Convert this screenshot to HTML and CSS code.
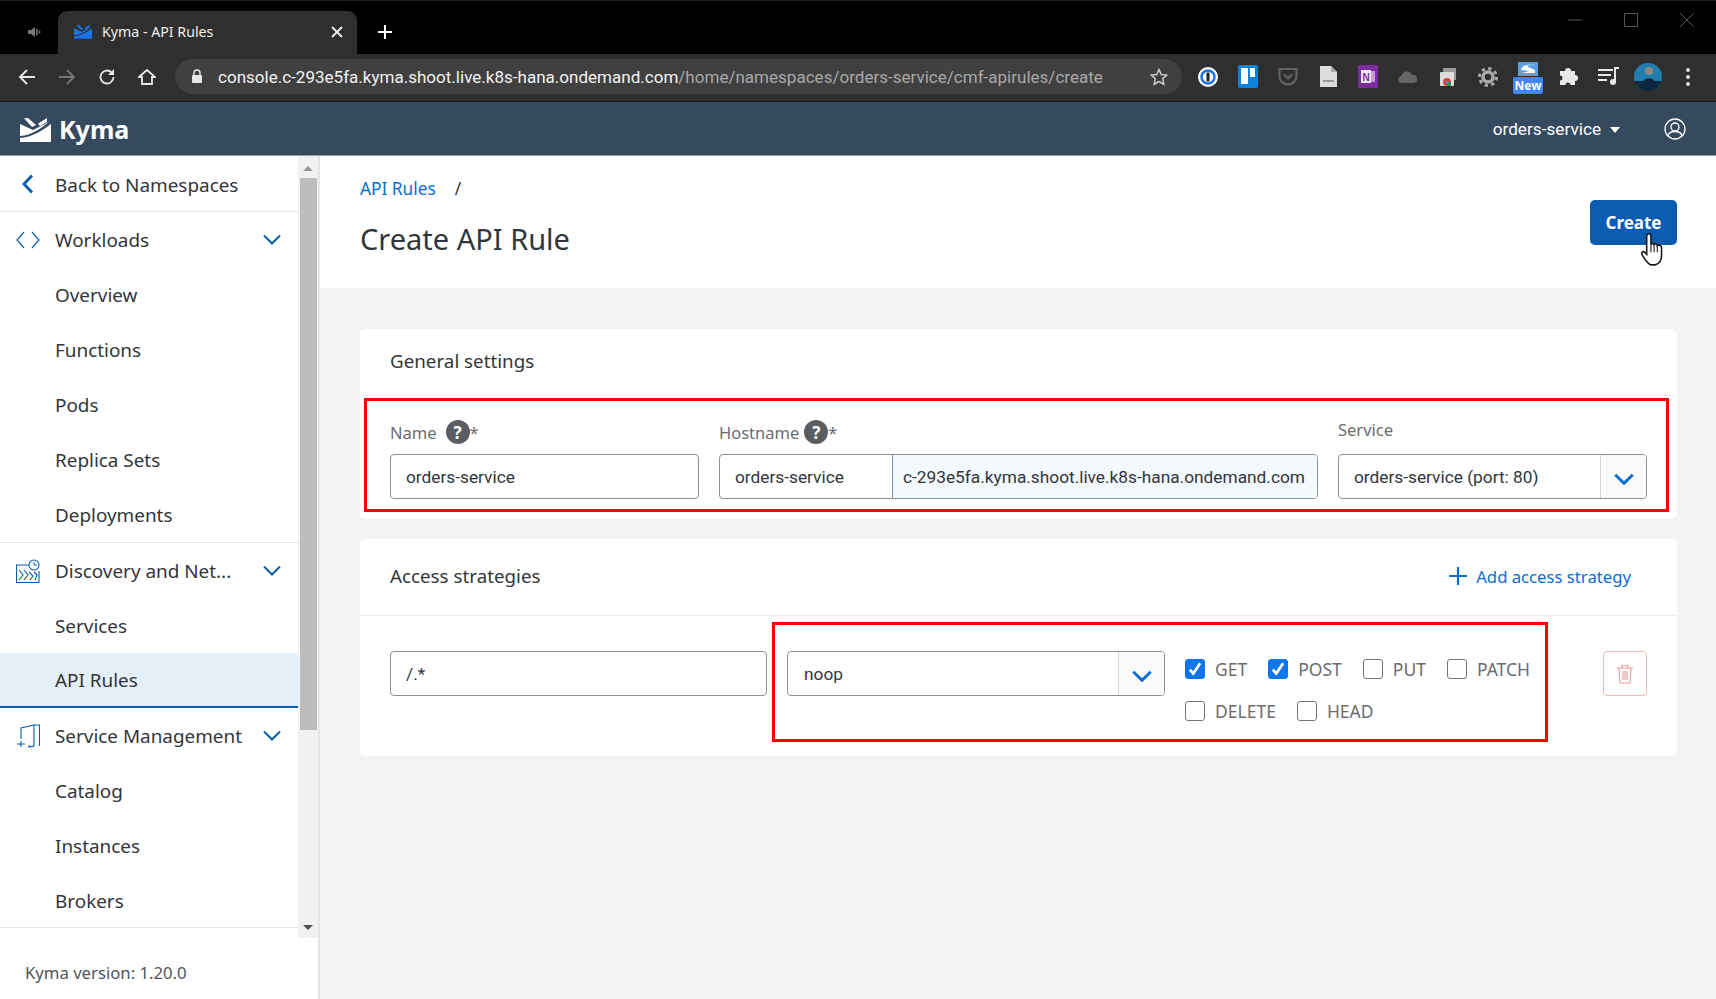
FILE: index.html
```html
<!DOCTYPE html>
<html>
  <head>
    <meta charset="UTF-8" />
    <title>Kyma - API Rules</title>
    <link rel="stylesheet" href="styles.css">
  </head>
  <body>
    <div class="tabstrip">
      <svg class="muted-tab" width="16" height="16" viewBox="0 0 16 16"><path d="M2 6h3l4-3v10l-4-3H2z" fill="#777"/><path d="M11 5v6M13.500 6.500v3" stroke="#777" stroke-width="1.500"/></svg>
      <div class="tab">
        <svg width="18" height="15" viewBox="0 0 31 25"><path d="M4 1.300L8 1l8 7-4 2zM18 6.700L27 1v4l-7 4zM0 7l13 6 16-8C20 12 12 18 0 19zM0 21C12 20 22 14 31 7v18H0z" fill="#1a73e8"/></svg>
        <span class="tab-title">Kyma - API Rules</span>
        <svg class="tab-close" width="12" height="12" viewBox="0 0 12 12"><path d="M1 1l10 10M11 1L1 11" stroke="#eee" stroke-width="1.800"/></svg>
      </div>
      <svg class="new-tab" width="16" height="16" viewBox="0 0 16 16"><path d="M8 1v14M1 8h14" stroke="#fff" stroke-width="2"/></svg>
      <div class="window-controls">
        <svg width="14" height="14" viewBox="0 0 14 14"><path d="M0 7h14" stroke="#555"/></svg>
        <svg width="14" height="14" viewBox="0 0 14 14"><path d="M.5.5h13v13H.5z" fill="none" stroke="#555"/></svg>
        <svg width="14" height="14" viewBox="0 0 14 14"><path d="M0 0l14 14M14 0L0 14" stroke="#555"/></svg>
      </div>
    </div>

    <div class="toolbar">
      <div class="nav-buttons">
        <svg width="18" height="18" viewBox="0 0 18 18"><path d="M17 9H2M9 2L2 9l7 7" fill="none" stroke="#e8e8e8" stroke-width="1.800"/></svg>
        <svg width="18" height="18" viewBox="0 0 18 18"><path d="M1 9h15M9 2l7 7-7 7" fill="none" stroke="#777" stroke-width="1.800"/></svg>
        <svg width="18" height="18" viewBox="0 0 18 18"><path d="M15.500 9a6.500 6.500 0 1 1-2-4.700" fill="none" stroke="#e8e8e8" stroke-width="1.800"/><path d="M16 1v6h-6z" fill="#e8e8e8"/></svg>
        <svg width="18" height="18" viewBox="0 0 18 18"><path d="M1 9l8-7 8 7h-3v7H4V9z" fill="none" stroke="#e8e8e8" stroke-width="1.800"/></svg>
      </div>
      <div class="omnibox">
        <svg width="12" height="15" viewBox="0 0 12 15"><path d="M3 6V4a3 3 0 0 1 6 0v2" fill="none" stroke="#e8e8e8" stroke-width="1.400"/><rect x="1" y="6" width="10" height="8" rx="1" fill="#e8e8e8"/></svg>
        <span class="url"><b>console.c-293e5fa.kyma.shoot.live.k8s-hana.ondemand.com</b>/home/namespaces/orders-service/cmf-apirules/create</span>
        <svg class="star" width="18" height="18" viewBox="0 0 18 18"><path d="M9 1.500l2.300 5 5.400.6-4 3.700 1.100 5.400L9 13.500l-4.800 2.700 1.100-5.400-4-3.700 5.400-.6z" fill="none" stroke="#ccc" stroke-width="1.500"/></svg>
      </div>
      <div class="extensions">
        <svg width="20" height="20" viewBox="0 0 20 20"><circle cx="10" cy="10" r="10" fill="#fff"/><circle cx="10" cy="10" r="6.500" fill="none" stroke="#1a73e8" stroke-width="2.500"/><rect x="8.500" y="5.500" width="3" height="9" fill="#222"/></svg>
        <svg width="20" height="23" viewBox="0 0 20 23"><rect width="20" height="23" rx="2" fill="#0c83d9"/><rect x="3" y="3" width="7" height="16" fill="#fff"/><rect x="12" y="3" width="5" height="9" fill="#fff"/></svg>
        <svg width="20" height="21" viewBox="0 0 20 20"><path d="M1.500 2.500h17v7a8.500 8.500 0 0 1-17 0z" fill="none" stroke="#666" stroke-width="2"/><path d="M6 8l4 4 4-4" fill="none" stroke="#666" stroke-width="2"/></svg>
        <svg width="17" height="21" viewBox="0 0 17 21"><path d="M0 0h11l6 6v15H0z" fill="#ddd"/><path d="M11 0l6 6h-6z" fill="#aaa"/><rect x="3" y="14" width="11" height="2" fill="#999"/></svg>
        <svg width="20" height="23" viewBox="0 0 20 23"><rect width="20" height="23" fill="#7b2c9e"/><rect x="3" y="5" width="10" height="13" fill="#f2e6f7"/><rect x="13" y="6" width="4" height="11" fill="#c69bd8"/><text x="4.500" y="15.500" class="ext-letter">N</text></svg>
        <svg width="20" height="14" viewBox="0 0 20 14"><path d="M4 13a3.500 3.500 0 0 1-.5-7A5.500 5.500 0 0 1 14 5a4 4 0 0 1 2 8z" fill="#666"/></svg>
        <svg width="18" height="20" viewBox="0 0 18 20"><rect x="4" y="1" width="13" height="12" fill="#999"/><rect x="1" y="5" width="14" height="14" rx="1" fill="#ddd"/><circle cx="8" cy="15" r="4" fill="#db4437"/><path d="M8 15v4h4v-4z" fill="#0f9d58"/><circle cx="8" cy="15" r="1.500" fill="#4285f4"/></svg>
        <svg width="20" height="20" viewBox="0 0 20 20"><circle cx="10" cy="10" r="5" fill="none" stroke="#aaa" stroke-width="3.500"/><circle cx="10" cy="10" r="8.500" fill="none" stroke="#aaa" stroke-width="3" stroke-dasharray="3.300 3.370"/></svg>
        <div class="ext-new">
          <svg width="20" height="14" viewBox="0 0 20 14"><rect width="20" height="14" fill="#5b9fe0"/><path d="M3 7c2-4 8-5 14-4-4 0-8 0-7 2l7 3v3H3l9-2-9-1z" fill="#fff"/></svg>
          <span class="new-badge">New</span>
        </div>
        <svg width="19" height="19" viewBox="0 0 19 19"><path d="M6 4a3 3 0 0 1 6 0h4v4a3 3 0 0 1 0 6v4h-4.500a2.500 2.500 0 0 0-5 0H1v-4.500a2.500 2.500 0 0 0 0-5V4z" fill="#e8e8e8"/></svg>
        <svg width="21" height="19" viewBox="0 0 21 19"><path d="M0 3h15M0 8h13M0 13h9" stroke="#e8e8e8" stroke-width="2"/><circle cx="15" cy="15" r="3" fill="#e8e8e8"/><path d="M17 15V1h4" fill="none" stroke="#e8e8e8" stroke-width="2"/></svg>
        <svg class="avatar" width="28" height="28" viewBox="0 0 28 28"><defs><clipPath id="avatar-clip"><circle cx="14" cy="14" r="14"/></clipPath></defs><g clip-path="url(#avatar-clip)"><rect width="28" height="28" fill="#1f7fae"/><rect y="18" width="28" height="10" fill="#0c2a40"/><circle cx="15" cy="8" r="4" fill="#8d8a80"/><path d="M6 28c0-17 18-17 18 0z" fill="#0d2740"/></g></svg>
        <svg width="4" height="18" viewBox="0 0 4 18"><circle cx="2" cy="2" r="2" fill="#ddd"/><circle cx="2" cy="9" r="2" fill="#ddd"/><circle cx="2" cy="16" r="2" fill="#ddd"/></svg>
      </div>
    </div>

    <header class="shell">
      <svg class="shell-logo" width="31" height="25" viewBox="0 0 31 25"><path d="M4 1.300L8 1l8 7-4 2zM18 6.700L27 1v4l-7 4zM0 7l13 6 16-8C20 12 12 18 0 19zM0 21C12 20 22 14 31 7v18H0z" fill="#fff"/></svg>
      <span class="shell-title">Kyma</span>
      <span class="shell-namespace">orders-service</span>
      <span class="shell-caret"></span>
      <svg class="shell-user" width="22" height="22" viewBox="0 0 22 22"><circle cx="11" cy="11" r="10" fill="none" stroke="#fff" stroke-width="1.300"/><circle cx="11" cy="9" r="4" fill="none" stroke="#fff" stroke-width="1.300"/><path d="M4 18c1-6 13-6 14 0" fill="none" stroke="#fff" stroke-width="1.300"/></svg>
    </header>

    <div class="layout">
      <aside class="sidebar">
        <div class="sidebar-top">
          <nav class="nav">
            <a class="nav-row nav-back">
              <svg class="nav-icon" width="14" height="20" viewBox="0 0 14 20"><path d="M11 1.500L3 10l8 8.500" fill="none" stroke="#0a5cb0" stroke-width="2.800"/></svg>
              Back to Namespaces
            </a>
            <div class="nav-group nav-group-first">
              <a class="nav-row">
                <svg class="nav-icon" width="24" height="18" viewBox="0 0 24 18"><path d="M8 1L1 9l7 8M16 1l7 8-7 8" fill="none" stroke="#0a5cb0" stroke-width="1.200"/></svg>
                Workloads
                <svg class="nav-chevron" width="18" height="11" viewBox="0 0 18 11"><path d="M1 1.500l8 8 8-8" fill="none" stroke="#0a5cb0" stroke-width="2"/></svg>
              </a>
              <a class="nav-row">Overview</a>
              <a class="nav-row">Functions</a>
              <a class="nav-row">Pods</a>
              <a class="nav-row">Replica Sets</a>
              <a class="nav-row">Deployments</a>
            </div>
            <div class="nav-group">
              <a class="nav-row">
                <svg class="nav-icon" width="24" height="24" viewBox="0 0 24 24"><path d="M14 6H.5v17.500h22.500V12" fill="none" stroke="#0a5cb0" stroke-width="1.100"/><path d="M3 11l4 5-4 5M8 11l4 5-4 5M13 13l4 4-3 4M18 13l3 3-2 5" fill="none" stroke="#0a5cb0" stroke-width="1.100"/><circle cx="18" cy="6" r="5" fill="#fff" stroke="#0a5cb0" stroke-width="1.100"/><path d="M18 3v3h3" fill="none" stroke="#0a5cb0"/></svg>
                Discovery and Net...
                <svg class="nav-chevron" width="18" height="11" viewBox="0 0 18 11"><path d="M1 1.500l8 8 8-8" fill="none" stroke="#0a5cb0" stroke-width="2"/></svg>
              </a>
              <a class="nav-row">Services</a>
              <a class="nav-row nav-active">API Rules</a>
            </div>
            <div class="nav-group">
              <a class="nav-row">
                <svg class="nav-icon" width="24" height="24" viewBox="0 0 24 24"><path d="M5 15V4l13-3h5.500v20l-1 .5M18 1v21l-5 1v-2" fill="none" stroke="#0a5cb0" stroke-width="1.100"/><path d="M5 17v6M1 20h8" stroke="#0a5cb0" stroke-width="1.100"/></svg>
                Service Management
                <svg class="nav-chevron" width="18" height="11" viewBox="0 0 18 11"><path d="M1 1.500l8 8 8-8" fill="none" stroke="#0a5cb0" stroke-width="2"/></svg>
              </a>
              <a class="nav-row">Catalog</a>
              <a class="nav-row">Instances</a>
              <a class="nav-row">Brokers</a>
            </div>
          </nav>
          <div class="scrollbar">
            <span class="scroll-arrow scroll-up"></span>
            <span class="scroll-thumb"></span>
            <span class="scroll-arrow scroll-down"></span>
          </div>
        </div>
        <div class="sidebar-footer">Kyma version: 1.20.0</div>
      </aside>

      <main class="content">
        <section class="page-header">
          <div>
            <div class="breadcrumb"><a>API Rules</a><span>/</span></div>
            <h1>Create API Rule</h1>
          </div>
          <button class="btn-create">Create</button>
          <svg class="cursor" width="26" height="34" viewBox="0 0 24 32"><path d="M7 3c0-3 4-3 4 0v8c1-2 3-1 3 0 1-1 3-1 3 1 1-1 4-1 4 2v7c0 5-2 8-6 9h-4c-3-1-5-4-8-9-2-3 1-4 2-3l2 2z" fill="#fff" stroke="#1a1a1a" stroke-width="1.500"/><path d="M11 11v7M14 12v6M17 13v5" stroke="#1a1a1a"/></svg>
        </section>

        <section class="card">
          <div class="card-header"><h2>General settings</h2></div>
          <div class="general-body">
            <div class="field field-name">
              <label class="field-label">Name <span class="help">?</span><span class="req">*</span></label>
              <div class="input">orders-service</div>
            </div>
            <div class="field field-host">
              <label class="field-label">Hostname <span class="help">?</span><span class="req">*</span></label>
              <div class="input-group">
                <div class="host-value">orders-service</div>
                <div class="host-addon">c-293e5fa.kyma.shoot.live.k8s-hana.ondemand.com</div>
              </div>
            </div>
            <div class="field field-service">
              <label class="field-label field-label-plain">Service</label>
              <div class="select">
                <span class="select-value">orders-service (port: 80)</span>
                <span class="select-btn"><svg width="20" height="12" viewBox="0 0 18 11"><path d="M1 1.500l8 8 8-8" fill="none" stroke="#0a6ed1" stroke-width="2.600"/></svg></span>
              </div>
            </div>
          </div>
          <div class="annotation annotation-general"></div>
        </section>

        <section class="card">
          <div class="card-header card-header-split">
            <h2>Access strategies</h2>
            <a class="add-link"><svg width="18" height="18" viewBox="0 0 18 18"><path d="M9 0v18M0 9h18" stroke="#0a6ed1" stroke-width="2.200"/></svg>Add access strategy</a>
          </div>
          <div class="strategy-body">
            <div class="input input-path">/.*</div>
            <div class="select select-type">
              <span class="select-value">noop</span>
              <span class="select-btn"><svg width="20" height="12" viewBox="0 0 18 11"><path d="M1 1.500l8 8 8-8" fill="none" stroke="#0a6ed1" stroke-width="2.600"/></svg></span>
            </div>
            <div class="methods">
              <label class="method"><span class="check checked"><svg width="16" height="16" viewBox="0 0 14 14"><path d="M2.500 7.500l3 3.500 6-9" fill="none" stroke="#fff" stroke-width="2.400"/></svg></span>GET</label>
              <label class="method"><span class="check checked"><svg width="16" height="16" viewBox="0 0 14 14"><path d="M2.500 7.500l3 3.500 6-9" fill="none" stroke="#fff" stroke-width="2.400"/></svg></span>POST</label>
              <label class="method"><span class="check"></span>PUT</label>
              <label class="method"><span class="check"></span>PATCH</label>
              <label class="method"><span class="check"></span>DELETE</label>
              <label class="method"><span class="check"></span>HEAD</label>
            </div>
            <button class="btn-delete"><svg width="18" height="20" viewBox="0 0 18 20"><path d="M1 4h16M6 4V1.500h6V4M3 4l1 15h10l1-15M7 7v9M9 7v9M11 7v9" fill="none" stroke="#e9a0a0" stroke-width="1.200"/></svg></button>
          </div>
          <div class="annotation annotation-strategy"></div>
        </section>
      </main>
    </div>
  </body>
</html>
```
FILE: styles.css
```css
* {
  box-sizing: border-box;
}
body {
  margin: 0;
  height: 999px;
  overflow: hidden;
  font-family: "Noto Sans", Arial, sans-serif;
  color: #32363a;
  background: #f2f3f4;
}

/* browser chrome */
.tabstrip {
  height: 54px;
  background: #000;
  border-top: 1px solid #222;
  display: flex;
  align-items: flex-end;
  position: relative;
}
.muted-tab {
  margin: 0 16px 14px 26px;
}
.tab {
  width: 299px;
  height: 43px;
  background: #2f2f2f;
  border-radius: 9px 9px 0 0;
  display: flex;
  align-items: center;
  padding: 0 14px 2px 16px;
  color: #eee;
  font-size: 14.200px;
}
.tab-title {
  margin-left: 10px;
  flex: 1;
}
.new-tab {
  margin: 0 0 14px 20px;
}
.window-controls {
  margin-left: auto;
  display: flex;
  gap: 42px;
  padding: 0 22px 27px 0;
}
.toolbar {
  height: 48px;
  background: #2f2f2f;
  display: flex;
  align-items: center;
  border-bottom: 1px solid #1d1d1d;
  padding-bottom: 2px;
  color: #fff;
}
.nav-buttons {
  display: flex;
  gap: 22px;
  padding-left: 18px;
  width: 175px;
}
.omnibox {
  width: 1007px;
  height: 35px;
  background: #404040;
  border-radius: 18px;
  display: flex;
  align-items: center;
  padding: 0 14px 0 16px;
}
.url {
  margin-left: 15px;
  flex: 1;
  font-family: Roboto, sans-serif;
  font-size: 17.050px;
  color: #a9a9a9;
  white-space: nowrap;
}
.url b {
  font-weight: 400;
  color: #f2f2f2;
}
.extensions {
  display: grid;
  grid-template-columns: repeat(13, 40px);
  align-items: center;
  justify-items: center;
  padding-left: 6px;
}
.ext-letter {
  font: bold 10px "Liberation Sans", sans-serif;
  fill: #7b2c9e;
}
.ext-new {
  position: relative;
  width: 30px;
  height: 32px;
  display: flex;
  justify-content: center;
  margin-top: 2px;
}
.new-badge {
  position: absolute;
  left: 0;
  bottom: 0;
  width: 30px;
  height: 17px;
  background: #4285f4;
  border-radius: 2px;
  color: #fff;
  font: bold 12px/17px "Noto Sans", sans-serif;
  text-align: center;
}

/* kyma shell */
.shell {
  height: 54px;
  background: #354a5f;
  border-bottom: 1px solid #8fa0ad;
  display: flex;
  align-items: center;
  color: #fff;
  padding: 1px 30px 0 20px;
}
.shell-title {
  margin-left: 8px;
  font-size: 25px;
  font-weight: 700;
  flex: 1;
}
.shell-namespace {
  font-family: Roboto, sans-serif;
  font-size: 17.200px;
}
.shell-caret {
  margin: 2px 0 0 9px;
  border-left: 5px solid transparent;
  border-right: 5px solid transparent;
  border-top: 6px solid #fff;
}
.shell-user {
  margin-left: 44px;
}

.layout {
  display: flex;
  height: 843px;
}

/* side navigation */
.sidebar {
  width: 320px;
  background: #fff;
  border-right: 2px solid #e5e5e5;
  display: flex;
  flex-direction: column;
  flex-shrink: 0;
}
.sidebar-top {
  display: flex;
  height: 772px;
  position: relative;
}
.nav {
  width: 298px;
  height: 772px;
  overflow: hidden;
  border-bottom: 1px solid #e5e5e5;
}
.nav-row {
  height: 55px;
  display: flex;
  align-items: center;
  padding-left: 55px;
  font-size: 18.900px;
  position: relative;
}
.nav-back {
  border-bottom: 1px solid #e5e5e5;
  height: 56px;
  padding-top: 3px;
}
.nav-group {
  box-shadow: inset 0 -1px 0 #e5e5e5;
}
.nav-group:last-child {
  box-shadow: none;
}
.nav-group-first {
  padding-bottom: 1px;
}
.nav-icon {
  position: absolute;
  left: 16px;
  top: 50%;
  transform: translateY(-50%);
}
.nav-back .nav-icon {
  left: 21px;
}
.nav-chevron {
  position: absolute;
  right: 17px;
  top: 22px;
}
.nav-active {
  background: #e5eff8;
  border-bottom: 2px solid #0a5cb0;
}
.scrollbar {
  width: 20px;
  height: 782px;
  background: #f1f1f1;
  display: flex;
  flex-direction: column;
  align-items: center;
  position: absolute;
  left: 298px;
  top: 0;
}
.scroll-thumb {
  width: 17px;
  height: 552px;
  background: #bdbdbd;
}
.scroll-arrow {
  border-left: 5px solid transparent;
  border-right: 5px solid transparent;
  height: 0;
}
.scroll-up {
  border-bottom: 5px solid #9a9a9a;
  margin: 10px 0 7px;
}
.scroll-down {
  border-top: 5px solid #505050;
  margin-top: auto;
  margin-bottom: 8px;
}
.sidebar-footer {
  padding: 33px 0 0 25px;
  font-size: 16.700px;
  color: #515559;
}

/* main area */
.content {
  flex: 1;
  padding-bottom: 20px;
}
.page-header {
  height: 132px;
  background: #fff;
  padding: 19px 39px 0 40px;
  display: flex;
  justify-content: space-between;
  position: relative;
  margin-bottom: 41px;
}
.breadcrumb {
  font-size: 17.300px;
  display: flex;
  gap: 19px;
  height: 30px;
  line-height: 28px;
}
.breadcrumb a {
  color: #0a6ed1;
}
h1 {
  margin: 14px 0 0;
  font-size: 29px;
  font-weight: 400;
  line-height: 39px;
}
.btn-create {
  margin-top: 25px;
  width: 87px;
  height: 45px;
  border: none;
  border-radius: 5px;
  background: #0a5cb0;
  color: #fff;
  font: 700 17px "Noto Sans", sans-serif;
}
.cursor {
  position: absolute;
  left: 1319px;
  top: 77px;
}
.card {
  margin: 0 39px 20px 40px;
  background: #fff;
  border-radius: 5px;
  position: relative;
}
.card-header {
  height: 67px;
  padding: 0 30px 2px;
  display: flex;
  align-items: center;
  border-bottom: 1px solid #eeeeee;
}
.card-header-split {
  height: 77px;
  justify-content: space-between;
  padding-right: 46px;
}
h2 {
  margin: 0;
  font-size: 18.800px;
  font-weight: 400;
}
.add-link {
  display: flex;
  align-items: center;
  gap: 9px;
  color: #0a6ed1;
  font-size: 16.700px;
}
.general-body {
  display: grid;
  grid-template-columns: 309px 599px 309px;
  column-gap: 20px;
  padding: 22px 30px 20px;
}
.field-label {
  height: 36px;
  display: flex;
  align-items: center;
  color: #6a6d70;
  font-size: 16.500px;
  padding-bottom: 8px;
}
.field-label-plain {
  padding-bottom: 14px;
}
.help {
  width: 24px;
  height: 24px;
  margin-left: 9px;
  border-radius: 50%;
  background: #5a5e62;
  color: #fff;
  font-size: 17px;
  font-weight: 700;
  display: flex;
  align-items: center;
  justify-content: center;
}
.field-host .help {
  margin-left: 5px;
}
.input {
  height: 45px;
  border: 1px solid #89919a;
  border-radius: 4px;
  padding: 0 15px;
  display: flex;
  align-items: center;
  font-family: Roboto, sans-serif;
  font-size: 17.300px;
  background: #fff;
}
.input-group {
  height: 45px;
  display: flex;
  border: 1px solid #89919a;
  border-radius: 4px;
  overflow: hidden;
  font-family: Roboto, sans-serif;
  font-size: 17.300px;
}
.host-value {
  width: 173px;
  flex-shrink: 0;
  padding-left: 15px;
  display: flex;
  align-items: center;
  border-right: 1px solid #89919a;
}
.host-addon {
  flex: 1;
  background: #f4f9fd;
  display: flex;
  align-items: center;
  padding-left: 10px;
  white-space: nowrap;
}
.select {
  height: 45px;
  border: 1px solid #89919a;
  border-radius: 4px;
  display: flex;
  align-items: center;
  font-family: Roboto, sans-serif;
  font-size: 17.300px;
  overflow: hidden;
}
.select-value {
  flex: 1;
  padding-left: 15px;
}
.select-type .select-value {
  padding-left: 16px;
}
.select-btn {
  width: 46px;
  height: 100%;
  background: #fafafa;
  border-left: 1px solid #d5d8db;
  display: flex;
  align-items: center;
  justify-content: center;
  padding-top: 4px;
}
.strategy-body {
  display: grid;
  grid-template-columns: 377px 378px 1fr 44px;
  column-gap: 20px;
  padding: 35px 30px 35px;
}
.methods {
  display: flex;
  flex-wrap: wrap;
  row-gap: 22px;
  column-gap: 21px;
  margin-top: 8px;
  height: 62px;
  width: 350px;
}
.method {
  display: flex;
  align-items: center;
  gap: 10px;
  height: 20px;
  font-size: 17.500px;
  color: #6a6d70;
}
.check {
  width: 20px;
  height: 20px;
  border: 1px solid #767676;
  border-radius: 3px;
  display: flex;
  align-items: center;
  justify-content: center;
}
.checked {
  background: #0a76f0;
  border-color: #0a76f0;
}
.btn-delete {
  height: 45px;
  width: 44px;
  background: #fff;
  border: 1px solid #f0b8b8;
  border-radius: 4px;
  display: flex;
  align-items: center;
  justify-content: center;
  padding: 0;
}

/* red boxes drawn over the screenshot */
.annotation {
  position: absolute;
  border: 3px solid #f00;
  pointer-events: none;
}
.annotation-general {
  left: 4px;
  top: 69px;
  width: 1305px;
  height: 114px;
}
.annotation-strategy {
  left: 412px;
  top: 83px;
  width: 776px;
  height: 120px;
}
```
